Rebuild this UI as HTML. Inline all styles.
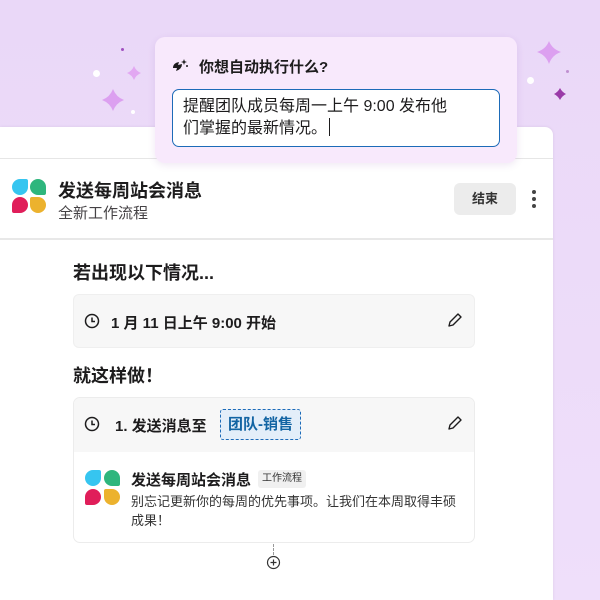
<!DOCTYPE html>
<html><head><meta charset="utf-8"><style>
*{margin:0;padding:0;box-sizing:border-box}
body{width:600px;height:600px;overflow:hidden;position:relative;font-family:"Liberation Sans","Noto Sans CJK SC",sans-serif;color:#1d1c1d;background:linear-gradient(180deg,#ead8f8 0%,#efdffa 100%)}
.a{position:absolute}
.card{left:0;top:127px;width:553px;height:473px;background:#fff;border-radius:0 8px 0 0;box-shadow:0 0 3px rgba(0,0,0,.08)}
.pop{left:155px;top:37px;width:362px;height:126px;background:#f8e9fc;border-radius:10px;box-shadow:0 2px 8px rgba(120,60,160,.12)}
.ta{left:172px;top:89px;width:328px;height:58px;background:#fff;border:1.5px solid #1d6bb8;border-radius:7px;font-size:16px;line-height:22px;padding:6px 10px;color:#1d1c1d}
.box{background:#f7f7f7;border-radius:6px;border:1px solid #efefef}
.b{font-weight:bold}
.leaf{position:absolute;width:16px;height:16px}
</style></head><body>
<div class="a" style="left:121px;top:48px;width:3px;height:3px;border-radius:50%;background:#a050c0"></div>
<div class="a" style="left:93px;top:70px;width:7px;height:7px;border-radius:50%;background:#fff"></div>
<div class="a" style="left:131px;top:110px;width:4px;height:4px;border-radius:50%;background:#fff"></div>
<div class="a" style="left:527px;top:77px;width:7px;height:7px;border-radius:50%;background:#fff"></div>
<div class="a" style="left:566px;top:70px;width:3px;height:3px;border-radius:50%;background:#c090d0"></div>
<svg class="a" style="left:0;top:0" width="600" height="130">
<path d="M134 66 Q136 71 141 73 Q136 75 134 80 Q132 75 127 73 Q132 71 134 66Z" fill="#e2a8f2"/>
<path d="M113 89 Q116 97 124 100 Q116 103 113 111 Q110 103 102 100 Q110 97 113 89Z" fill="#dca0f0"/>
<path d="M549 41 Q552 49 561 52 Q552 55 549 64 Q546 55 537 52 Q546 49 549 41Z" fill="#dca0f0"/>
<path d="M560 88 Q562 92 566 94 Q562 96 560 100 Q558 96 554 94 Q558 92 560 88Z" fill="#9a3aa8"/>
</svg>
<div class="a card">
 <div class="a" style="left:0;top:31px;width:553px;height:1px;background:#e6e6e6"></div>
 <div class="a" style="left:0;top:111px;width:553px;height:2px;background:#e8e8e8"></div>
</div>
<div class="leaf" style="left:12px;top:179px;background:#36c5f0;border-radius:8px 2px 8px 8px"></div>
<div class="leaf" style="left:30px;top:179px;background:#2eb67d;border-radius:8px 8px 2px 8px"></div>
<div class="leaf" style="left:12px;top:197px;background:#e01e5a;border-radius:8px 8px 8px 2px"></div>
<div class="leaf" style="left:30px;top:197px;background:#ecb22e;border-radius:2px 8px 8px 8px"></div>
<div class="a b" style="left:58px;top:177px;font-size:18px">发送每周站会消息</div>
<div class="a" style="left:58px;top:202px;font-size:15px;color:#454245">全新工作流程</div>
<div class="a b" style="left:454px;top:183px;width:62px;height:32px;background:#ececec;border-radius:6px;font-size:13px;line-height:32px;text-align:center;color:#333">结束</div>
<div class="a" style="left:532px;top:190px;width:4px;height:4px;border-radius:50%;background:#444;box-shadow:0 7px 0 #444,0 14px 0 #444"></div>
<div class="a b" style="left:73px;top:259px;font-size:18px">若出现以下情况...</div>
<div class="a box" style="left:73px;top:294px;width:402px;height:54px"></div>
<svg class="a" style="left:84px;top:313px" width="16" height="16"><circle cx="8" cy="8" r="6.5" fill="none" stroke="#1d1c1d" stroke-width="1.5"/><path d="M8 4.5V8.5H11" fill="none" stroke="#1d1c1d" stroke-width="1.5"/></svg>
<div class="a b" style="left:111px;top:312px;font-size:15px">1 月 11 日上午 9:00 开始</div>
<svg class="a" style="left:447px;top:312px" width="16" height="16"><path d="M2 14L3 10L11 2L14 5L6 13Z" fill="none" stroke="#1d1c1d" stroke-width="1.4" stroke-linejoin="round"/></svg>
<div class="a b" style="left:73px;top:362px;font-size:18px">就这样做！</div>
<div class="a" style="left:73px;top:397px;width:402px;height:146px;border:1px solid #ececec;border-radius:7px;background:#fff;overflow:hidden">
 <div style="height:54px;background:#f7f7f7"></div>
</div>
<svg class="a" style="left:84px;top:416px" width="16" height="16"><circle cx="8" cy="8" r="6.5" fill="none" stroke="#1d1c1d" stroke-width="1.5"/><path d="M8 4.5V8.5H11" fill="none" stroke="#1d1c1d" stroke-width="1.5"/></svg>
<div class="a b" style="left:115px;top:415px;font-size:15px">1. 发送消息至</div>
<div class="a b" style="left:220px;top:409px;width:81px;height:31px;border:1px dashed #1d6bb8;border-radius:3px;background:#e3eef9;color:#1264a3;font-size:15px;line-height:29px;text-align:center">团队-销售</div>
<svg class="a" style="left:447px;top:415px" width="16" height="16"><path d="M2 14L3 10L11 2L14 5L6 13Z" fill="none" stroke="#1d1c1d" stroke-width="1.4" stroke-linejoin="round"/></svg>
<div class="leaf" style="left:85px;top:470px;background:#36c5f0;border-radius:8px 2px 8px 8px"></div>
<div class="leaf" style="left:104px;top:470px;background:#2eb67d;border-radius:8px 8px 2px 8px"></div>
<div class="leaf" style="left:85px;top:489px;background:#e01e5a;border-radius:8px 8px 8px 2px"></div>
<div class="leaf" style="left:104px;top:489px;background:#ecb22e;border-radius:2px 8px 8px 8px"></div>
<div class="a b" style="left:131px;top:469px;font-size:15px">发送每周站会消息</div>
<div class="a" style="left:258px;top:470px;height:18px;padding:0 4px;background:#f0f0f0;border-radius:3px;font-size:10px;line-height:18px;color:#333">工作流程</div>
<div class="a" style="left:131px;top:492px;width:335px;font-size:13px;line-height:19px;color:#333">别忘记更新你的每周的优先事项。让我们在本周取得丰硕成果！</div>
<div class="a" style="left:273px;top:544px;height:11px;border-left:1px dashed #999"></div>
<svg class="a" style="left:266px;top:555px" width="15" height="15"><circle cx="7.5" cy="7.5" r="6" fill="#fff" stroke="#333" stroke-width="1.2"/><path d="M7.5 4.5V10.5M4.5 7.5H10.5" stroke="#333" stroke-width="1.2"/></svg>
<div class="a pop"></div>
<svg class="a" style="left:170px;top:57px" width="20" height="18"><path d="M3 11Q3 6 9 5L8 8L12 7Q12 12 6 14L7 11Z" fill="#1d1c1d"/><path d="M14 2L14.8 4.2L17 5L14.8 5.8L14 8L13.2 5.8L11 5L13.2 4.2Z" fill="#1d1c1d"/><circle cx="17" cy="9" r="1" fill="#1d1c1d"/></svg>
<div class="a b" style="left:199px;top:56px;font-size:15px">你想自动执行什么?</div>
<div class="a ta">提醒团队成员每周一上午 9:00 发布他<br>们掌握的最新情况。<span style="display:inline-block;width:1px;height:18px;background:#1d1c1d;vertical-align:-3px;margin-left:2px"></span></div>
</body></html>
